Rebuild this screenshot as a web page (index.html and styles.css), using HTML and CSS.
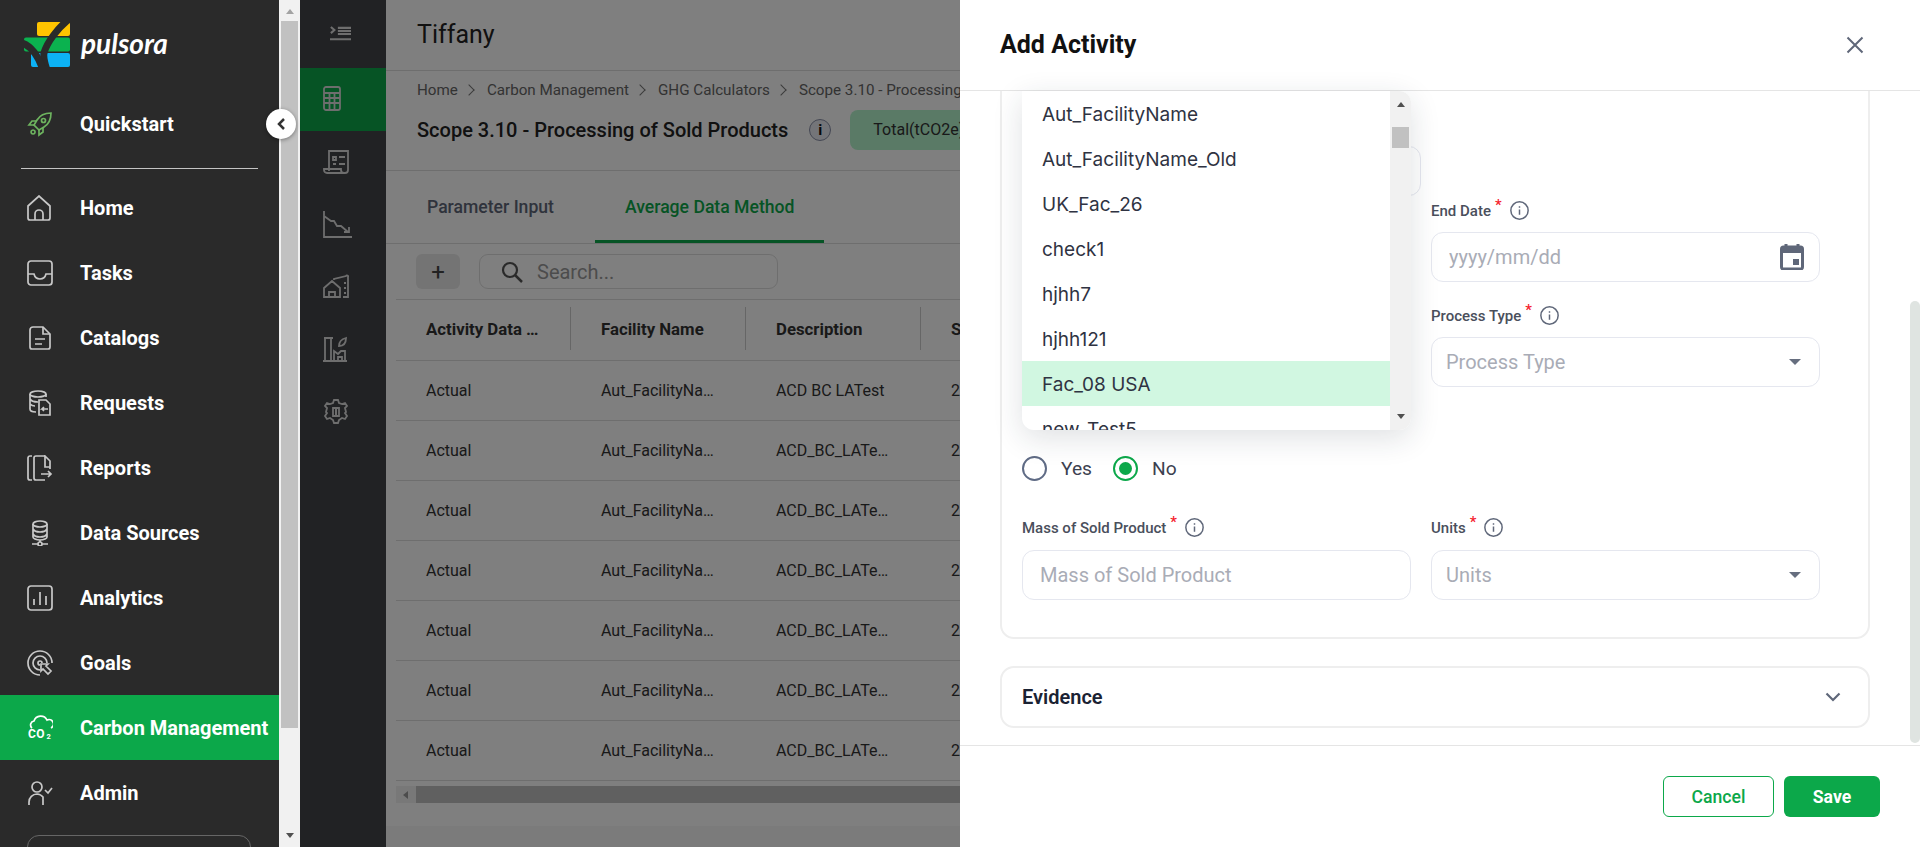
FILE: index.html
```html
<!DOCTYPE html>
<html lang="en">
<head>
	<meta charset="UTF-8">
	<title>Add Activity</title>
	<link rel="stylesheet" href="styles.css">
</head>
<body>

<aside class="sidebar">
	<div class="sideInner">
		<div class="logo">
			<svg class="logoMark" viewBox="0 0 46 46">
				<rect x="13" y="0" width="33" height="14" rx="2" fill="#ffc400"/>
				<rect x="0" y="15.500" width="46" height="14" rx="2" fill="#0bb24f"/>
				<rect x="7" y="31" width="39" height="14" rx="2" fill="#0db2f5"/>
				<path d="M45 -3C34 6 23 20 20 31C19 36 21 42 23 48" fill="none" stroke="#2a2a2a" stroke-width="7"/>
				<path d="M-2 21C7 24 14 33 19 48" fill="none" stroke="#2a2a2a" stroke-width="7"/>
			</svg>
			<span class="logoText">pulsora</span>
		</div>
		<a class="navItem"><svg class="navIcon green" viewBox="0 0 26 26"><path d="M24 2c-6 0-11 2-14 7l-3 5 5 5 5-3c5-3 7-8 7-14z"/><circle cx="16.500" cy="9.500" r="2"/><path d="M9 10H5l-3 4h5M16 17v4l-4 3v-5M6 19a2 2 0 1 0 .1 0z"/></svg>Quickstart</a>
		<div class="sideLine"></div>
		<a class="navItem"><svg class="navIcon" viewBox="0 0 26 26"><path d="M1 11 12 1l11 10v12a2 2 0 0 1-2 2H3a2 2 0 0 1-2-2z"/><path d="M8 25v-6a4 4 0 0 1 8 0v6"/></svg>Home</a>
		<a class="navItem"><svg class="navIcon" viewBox="0 0 26 26"><rect x="1" y="1" width="24" height="24" rx="3"/><path d="M1 14h6c1 4 3 5 6 5s5-1 6-5h6"/></svg>Tasks</a>
		<a class="navItem"><svg class="navIcon" viewBox="0 0 26 26"><path d="M16 2H6a3 3 0 0 0-3 3v17a2 2 0 0 0 2 2h16a2 2 0 0 0 2-2V9z"/><path d="M16 2v7h7M8 14h10M8 19h7"/></svg>Catalogs</a>
		<a class="navItem"><svg class="navIcon" viewBox="0 0 26 26"><ellipse cx="11" cy="4" rx="8" ry="3"/><path d="M3 4v15c0 1.500 2 3 6 3M19 4v3M3 9c1 2 4 3 8 3M3 14c1 1 3 2 5 2"/><path d="M12 10h7l4 4v11H12zM21 19h-6l2-2m-2 2 2 2"/></svg>Requests</a>
		<a class="navItem"><svg class="navIcon" viewBox="0 0 26 26"><path d="M5 1H3a2 2 0 0 0-2 2v20a2 2 0 0 0 2 2h2"/><path d="M18 1H9a2 2 0 0 0-2 2v20a2 2 0 0 0 2 2h9M18 1l5 5v6h-5V1zM23 14v-2M14 19h10m-3-3 3 3-3 3"/></svg>Reports</a>
		<a class="navItem"><svg class="navIcon" viewBox="0 0 26 26"><ellipse cx="13" cy="4" rx="7" ry="3"/><path d="M6 4v13c0 1.500 3 3 7 3s7-1.500 7-3V4M6 9c1 2 4 3 7 3s6-1 7-3M6 14c1 2 4 3 7 3s6-1 7-3M13 20v2M5 24h6m4 0h6"/><circle cx="13" cy="24" r="2"/></svg>Data Sources</a>
		<a class="navItem"><svg class="navIcon" viewBox="0 0 26 26"><rect x="1" y="1" width="24" height="24" rx="3"/><path d="M7 20v-6M13 20V7M19 20v-9"/></svg>Analytics</a>
		<a class="navItem"><svg class="navIcon" viewBox="0 0 26 26"><path d="M13 25a12 12 0 1 1 12-12"/><path d="M13 20a7 7 0 1 1 7-7"/><path d="M13 15a2 2 0 1 1 2-2M14 14h7l-2 2 5 5-3 3-5-5-2 2z"/></svg>Goals</a>
		<a class="navItem active"><svg class="navIcon" viewBox="0 0 26 26"><path d="M5 13a4 4 0 0 1 2-7 7 7 0 0 1 13-1 4 4 0 0 1 4 8"/><text x="1" y="23" class="co2">CO</text><text x="19.500" y="23.500" class="co2Sub">2</text></svg>Carbon Management</a>
		<a class="navItem"><svg class="navIcon" viewBox="0 0 26 26"><circle cx="10" cy="7" r="5"/><path d="M2 25v-3a8 8 0 0 1 8-8 8 8 0 0 1 6 3v8M18 10l3 3 4-5"/></svg>Admin</a>
		<div class="sideBox"></div>
	</div>
	<div class="sideBar">
		<span class="arrowUp"></span>
		<span class="sideThumb"></span>
		<span class="arrowDown"></span>
	</div>
	<div class="toggle"><svg width="12" height="14" viewBox="0 0 12 14"><path d="M9 2 4 7l5 5" fill="none" stroke="#333" stroke-width="2.500"/></svg></div>
</aside>

<nav class="rail">
	<div class="railTop"><svg class="railIcon" viewBox="0 0 24 18"><path d="M1 1l4 3.500L1 8M9 2h15M9 5.500h15M9 9h15M0 15h24" stroke-width="2.400"/></svg></div>
	<div class="railItem on"><svg class="railIcon small" viewBox="0 0 20 26"><rect x="1" y="1" width="16" height="23" rx="2"/><path d="M1 7h16M1 12h16M1 17h16M6.500 7v17M11.500 7v17"/></svg></div>
	<div class="railItem"><svg class="railIcon" viewBox="0 0 26 26"><path d="M6 22V2h19v19a3 3 0 0 1-3 3H4a3 3 0 0 1-3-3v-1h17v1a3 3 0 0 0 3 3"/><path d="M10 8h3v3h-3zM16 8h6M10 15h3M16 15h6"/></svg></div>
	<div class="railItem"><svg class="railIcon wide" viewBox="0 0 30 28"><path d="M1 1v26h28M1 6l7 5h3l3 5h4l7 6M26 17v5h-5"/></svg></div>
	<div class="railItem"><svg class="railIcon" viewBox="0 0 26 24"><path d="M1 13 9 6l8 7v9H1zM6 22v-5h6v5M11 5V4l12-3a1 1 0 0 1 2 1v20h-5M21 8h2M21 13h2M21 18h2"/></svg></div>
	<div class="railItem"><svg class="railIcon" viewBox="0 0 26 26"><path d="M0 25h24M2 25V2h6v23M1 2h9M11 25V15l4 3 3-3h4v10M15 25v-4h4v4M16 10c0-5 3-7 7-8 0 5-2 8-7 8z"/></svg></div>
	<div class="railItem"><svg class="railIcon" viewBox="0 0 26 26"><path d="M11 1h4l1 3 3 1 3-1 2 3-2 2 1 4-1 1 2 3-2 3-3-1-3 2-1 3h-4l-1-3-3-2-3 1-2-3 2-3-1-1 1-4-2-2 2-3 3 1 3-1z"/><path d="M10 9h6v8h-6zM12 11h2M12 13h2M12 15h2"/></svg></div>
</nav>

<main class="page">
	<header class="pageHead">Tiffany</header>
	<section class="titleBlock">
		<div class="crumbs">
			<span>Home</span><i class="crumbSep"></i>
			<span>Carbon Management</span><i class="crumbSep"></i>
			<span>GHG Calculators</span><i class="crumbSep"></i>
			<span>Scope 3.10 - Processing of Sold Products</span>
		</div>
		<div class="titleRow">
			<h1>Scope 3.10 - Processing of Sold Products</h1>
			<span class="infoDot">i</span>
			<span class="totalPill">Total(tCO2e)</span>
		</div>
	</section>
	<div class="tabs">
		<a class="tab">Parameter Input</a>
		<a class="tab current">Average Data Method</a>
	</div>
	<div class="toolbar">
		<button class="addBtn">+</button>
		<div class="search">
			<svg width="24" height="24" viewBox="0 0 24 24"><circle cx="10" cy="10" r="7" fill="none" stroke="#555" stroke-width="2.200"/><path d="M15 15l7 7" stroke="#555" stroke-width="2.500"/></svg>
			<span>Search...</span>
		</div>
	</div>
	<div class="table">
		<div class="tr th">
			<div class="td">Activity Data ...</div>
			<div class="td">Facility Name</div>
			<div class="td">Description</div>
			<div class="td">S</div>
		</div>
		<div class="tr"><div class="td">Actual</div><div class="td">Aut_FacilityName</div><div class="td">ACD BC LATest</div><div class="td">2</div></div>
		<div class="tr"><div class="td">Actual</div><div class="td">Aut_FacilityName</div><div class="td">ACD_BC_LATest</div><div class="td">2</div></div>
		<div class="tr"><div class="td">Actual</div><div class="td">Aut_FacilityName</div><div class="td">ACD_BC_LATest</div><div class="td">2</div></div>
		<div class="tr"><div class="td">Actual</div><div class="td">Aut_FacilityName</div><div class="td">ACD_BC_LATest</div><div class="td">2</div></div>
		<div class="tr"><div class="td">Actual</div><div class="td">Aut_FacilityName</div><div class="td">ACD_BC_LATest</div><div class="td">2</div></div>
		<div class="tr"><div class="td">Actual</div><div class="td">Aut_FacilityName</div><div class="td">ACD_BC_LATest</div><div class="td">2</div></div>
		<div class="tr"><div class="td">Actual</div><div class="td">Aut_FacilityName</div><div class="td">ACD_BC_LATest</div><div class="td">2</div></div>
	</div>
	<div class="hScroll"><span class="arrowLeft"></span><span class="hThumb"></span></div>
	<div class="pageFoot"></div>
</main>

<div class="overlay"></div>

<section class="drawer">
	<div class="drawerHead">
		<h2>Add Activity</h2>
		<svg width="18" height="18" viewBox="0 0 18 18"><path d="M1.500 1.500l15 15m0-15l-15 15" stroke="#5f6779" stroke-width="2"/></svg>
	</div>
	<div class="drawerBody">
		<div class="card">
			<div class="row first">
				<div class="box wide"></div>
			</div>
			<div class="row">
				<div></div>
				<div>
					<div class="label">End Date<sup>*</sup><svg class="info" viewBox="0 0 18 18"><circle cx="9" cy="9" r="8.200"/><path d="M9 8v5M9 5v1.500"/></svg></div>
					<div class="box">
						<input type="text" placeholder="yyyy/mm/dd">
						<svg class="calendar" viewBox="0 0 24 26"><path d="M6 0v3M18 0v3" stroke="#5f6779" stroke-width="3"/><rect x="1.500" y="3" width="21" height="22" rx="2" fill="#fff" stroke="#5f6779" stroke-width="3"/><path d="M1.500 3h21v6h-21z" fill="#5f6779"/><rect x="13" y="15" width="6" height="6" fill="#5f6779"/></svg>
					</div>
				</div>
			</div>
			<div class="row">
				<div></div>
				<div>
					<div class="label">Process Type<sup>*</sup><svg class="info" viewBox="0 0 18 18"><circle cx="9" cy="9" r="8.200"/><path d="M9 8v5M9 5v1.500"/></svg></div>
					<div class="box select">
						<input type="text" placeholder="Process Type">
						<i class="caret"></i>
					</div>
				</div>
			</div>
			<div class="row radioRow">
				<div>
					<div class="label peek"><svg class="info" viewBox="0 0 18 18"><circle cx="9" cy="9" r="8.200"/><path d="M9 8v5M9 5v1.500"/></svg></div>
					<div class="radios">
						<span class="radio"></span><span class="radioText">Yes</span>
						<span class="radio checked"></span><span class="radioText">No</span>
					</div>
				</div>
			</div>
			<div class="row last">
				<div>
					<div class="label">Mass of Sold Product<sup>*</sup><svg class="info" viewBox="0 0 18 18"><circle cx="9" cy="9" r="8.200"/><path d="M9 8v5M9 5v1.500"/></svg></div>
					<div class="box"><input type="text" placeholder="Mass of Sold Product"></div>
				</div>
				<div>
					<div class="label">Units<sup>*</sup><svg class="info" viewBox="0 0 18 18"><circle cx="9" cy="9" r="8.200"/><path d="M9 8v5M9 5v1.500"/></svg></div>
					<div class="box select">
						<input type="text" placeholder="Units">
						<i class="caret"></i>
					</div>
				</div>
			</div>
		</div>
		<div class="evidence">
			<span>Evidence</span>
			<svg width="16" height="10" viewBox="0 0 16 10"><path d="M1.500 1.500 8 8l6.500-6.500" fill="none" stroke="#5f6779" stroke-width="2.200"/></svg>
		</div>
		<span class="drawerThumb"></span>
	</div>
	<div class="drawerFoot">
		<button class="btn cancel">Cancel</button>
		<button class="btn save">Save</button>
	</div>

	<div class="dropdown">
		<ul class="options">
			<li>Aut_FacilityName</li>
			<li>Aut_FacilityName_Old</li>
			<li>UK_Fac_26</li>
			<li>check1</li>
			<li>hjhh7</li>
			<li>hjhh121</li>
			<li class="selected">Fac_08 USA</li>
			<li>new_Test5</li>
		</ul>
		<div class="dropBar">
			<span class="arrowUp dark"></span>
			<span class="dropThumb"></span>
			<span class="arrowDown dark"></span>
		</div>
	</div>
</section>

</body>
</html>
```

FILE: styles.css
```css
html, body {
	margin: 0;
	padding: 0;
	height: 100%;
	overflow: hidden;
}

body {
	display: flex;
	font-family: Roboto, "Liberation Sans", sans-serif;
	background: #fff;
}

a {
	text-decoration: none;
	color: inherit;
}

/* left sidebar */
.sidebar {
	position: relative;
	z-index: 3;
	display: flex;
	flex: 0 0 300px;
	height: 847px;
}

.sideInner {
	width: 279px;
	background: #2a2a2a;
	overflow: hidden;
}

.logo {
	display: flex;
	align-items: center;
	height: 91px;
	padding-left: 24px;
	box-sizing: border-box;
}

.logoMark {
	width: 46px;
	height: 46px;
	margin-top: -1px;
}

.logoText {
	margin-left: 11px;
	margin-top: -5px;
	font-family: Lato, sans-serif;
	font-size: 28px;
	font-weight: 700;
	font-style: italic;
	color: #fff;
}

.navItem {
	display: flex;
	align-items: center;
	height: 65px;
	padding-left: 27px;
	font-size: 20px;
	font-weight: 700;
	color: #fff;
	white-space: nowrap;
}

.navItem.active {
	background: #0ca84a;
}

.navIcon {
	width: 26px;
	height: 26px;
	margin-right: 27px;
	fill: none;
	stroke: #c8c8c8;
	stroke-width: 1.700;
}

.navIcon.green {
	stroke: #6db35f;
}

.active .navIcon {
	stroke: #fff;
}

.navIcon .co2, .navIcon .co2Sub {
	fill: #fff;
	stroke: none;
	font-weight: 700;
	font-size: 12px;
	letter-spacing: 0.500px;
}

.navIcon .co2Sub {
	font-size: 7.500px;
}

.sideLine {
	height: 1px;
	margin: 12px 21px 6px;
	background: #c4c4c4;
}

.sideBox {
	height: 60px;
	margin: 10px 28px 0 27px;
	border: 1px solid #666;
	border-radius: 12px;
}

.sideBar {
	display: flex;
	flex-direction: column;
	align-items: center;
	width: 21px;
	background: #f1f1f1;
}

.sideThumb {
	width: 17px;
	height: 707px;
	margin-top: 7px;
	background: #c1c1c1;
}

.sideBar .arrowUp {
	margin-top: 9px;
}

.sideBar .arrowDown {
	margin-top: auto;
	margin-bottom: 9px;
}

.arrowUp, .arrowDown {
	flex: none;
	width: 0;
	height: 0;
	border-left: 4.500px solid transparent;
	border-right: 4.500px solid transparent;
}

.arrowUp {
	border-bottom: 5px solid #a3a3a3;
}

.arrowDown {
	border-top: 5px solid #505050;
}

.arrowUp.dark {
	border-bottom-color: #505050;
}

.toggle {
	position: absolute;
	left: 266px;
	top: 109px;
	display: flex;
	align-items: center;
	justify-content: center;
	width: 30px;
	height: 30px;
	border-radius: 50%;
	background: #fff;
	box-shadow: 0 1px 4px rgba(0, 0, 0, 0.4);
}

/* second rail */
.rail {
	flex: 0 0 86px;
	background: #424448;
}

.railTop {
	display: flex;
	align-items: center;
	justify-content: center;
	height: 68px;
	padding-right: 6px;
	box-sizing: border-box;
}

.railItem {
	display: flex;
	align-items: center;
	height: 62.500px;
	padding-left: 23px;
	box-sizing: border-box;
}

.railItem.on {
	background: #0ca84a;
}

.railIcon {
	width: 26px;
	height: 26px;
	fill: none;
	stroke: #dcdcdc;
	stroke-width: 1.800;
}

.railTop .railIcon {
	width: 21px;
	height: 16px;
}

.railIcon.small {
	width: 20px;
}

.railIcon.wide {
	width: 30px;
	height: 28px;
}

/* page behind the drawer */
.page {
	display: flex;
	flex-direction: column;
	flex: 1;
	min-width: 0;
	height: 847px;
	overflow: hidden;
	color: #333;
}

.pageHead {
	height: 70px;
	padding: 0 0 0 31px;
	line-height: 69px;
	font-size: 25px;
	font-weight: 400;
	color: #222;
	border-bottom: 1px solid #ddd;
	flex: none;
}

.titleBlock {
	flex: none;
	height: 99px;
	padding-left: 31px;
	border-bottom: 1px solid #ddd;
}

.crumbs {
	display: flex;
	align-items: center;
	height: 38px;
	font-size: 15.200px;
	color: #666;
	white-space: nowrap;
}

.crumbSep {
	width: 7px;
	height: 7px;
	margin: 0 14px 0 7px;
	border-top: 1.500px solid #777;
	border-right: 1.500px solid #777;
	transform: rotate(45deg);
}

.titleRow {
	display: flex;
	align-items: center;
	height: 42px;
}

.titleRow h1 {
	margin: 0;
	font-size: 20px;
	font-weight: 500;
	color: #222;
	white-space: nowrap;
}

.infoDot {
	flex: none;
	width: 20px;
	height: 20px;
	margin-left: 21px;
	border: 1px solid #8a90a8;
	border-radius: 50%;
	background: #e8eaf2;
	font-size: 15px;
	font-weight: 700;
	line-height: 20px;
	text-align: center;
	color: #111;
}

.totalPill {
	flex: none;
	width: 300px;
	height: 40px;
	margin-left: 19px;
	padding-left: 23px;
	border-radius: 8px;
	background: #b4f4cc;
	font-size: 16px;
	line-height: 40px;
	color: #333;
}

.tabs {
	display: flex;
	flex: none;
	height: 73px;
	padding-left: 11px;
	box-sizing: border-box;
	border-bottom: 1px solid #ddd;
}

.tab {
	padding: 0 30px;
	line-height: 72px;
	font-size: 17.600px;
	font-weight: 500;
	color: #5f6779;
}

.tab.current {
	height: 72px;
	margin-left: 11px;
	border-bottom: 3px solid #0ca84a;
	box-sizing: border-box;
	color: #0ca84a;
}

.toolbar {
	display: flex;
	flex: none;
	gap: 19px;
	height: 55px;
	padding: 10px 0 0 30px;
	box-sizing: border-box;
}

.addBtn {
	width: 44px;
	height: 35px;
	padding: 0;
	border: 0;
	border-radius: 6px;
	background: #e9e9e9;
	font-family: inherit;
	font-size: 24px;
	color: #444;
}

.search {
	display: flex;
	align-items: center;
	width: 299px;
	height: 35px;
	padding-left: 20px;
	box-sizing: border-box;
	border: 1px solid #ddd;
	border-radius: 9px;
	font-size: 20px;
	color: #999;
}

.search span {
	margin-left: 13px;
}

.table {
	flex: none;
	margin-left: 10px;
	width: 900px;
	border-top: 1px solid #ddd;
}

.tr {
	display: flex;
	height: 60px;
	box-sizing: border-box;
	border-bottom: 1px solid #ddd;
}

.tr.th {
	height: 61px;
}

.td {
	position: relative;
	flex: 0 0 175px;
	box-sizing: border-box;
	padding-left: 30px;
	line-height: 59px;
	font-size: 16px;
	color: #333;
}

.tr .td:nth-child(-n+3) {
	padding-right: 32px;
	overflow: hidden;
	white-space: nowrap;
	text-overflow: ellipsis;
}

.th .td {
	font-size: 16.800px;
	font-weight: 700;
	line-height: 59px;
	color: #333;
}

.th .td:nth-child(-n+3)::after {
	content: "";
	position: absolute;
	right: 0;
	top: 7px;
	height: 43px;
	width: 1px;
	background: #ccc;
}

.hScroll {
	display: flex;
	flex: none;
	align-items: center;
	width: 900px;
	height: 17px;
	margin: 5px 0 0 10px;
	background: #f1f1f1;
}

.arrowLeft {
	width: 0;
	height: 0;
	margin: 0 8px 0 7px;
	border-top: 4.500px solid transparent;
	border-bottom: 4.500px solid transparent;
	border-right: 5px solid #999;
}

.hThumb {
	flex: 1;
	height: 17px;
	background: #c1c1c1;
}

.pageFoot {
	flex: none;
	height: 21px;
	margin-top: auto;
	background: #f6f6f6;
}

.overlay {
	position: fixed;
	left: 300px;
	right: 0;
	top: 0;
	bottom: 0;
	z-index: 1;
	background: rgba(0, 0, 0, 0.5);
}

/* drawer */
.drawer {
	position: fixed;
	top: 0;
	right: 0;
	bottom: 0;
	z-index: 2;
	display: flex;
	flex-direction: column;
	width: 960px;
	background: #fff;
}

.drawerHead {
	display: flex;
	flex: none;
	align-items: center;
	justify-content: space-between;
	height: 91px;
	padding: 0 56px 1px 40px;
	box-sizing: border-box;
	border-bottom: 1px solid #e5e5e5;
}

.drawerHead h2 {
	margin: 0;
	font-size: 25px;
	font-weight: 700;
	color: #111;
}

.drawerBody {
	position: relative;
	flex: 1;
	min-height: 0;
	padding-left: 40px;
	overflow: hidden;
}

.card {
	width: 870px;
	box-sizing: border-box;
	margin-top: -40px;
	padding: 93px 0 37px 20px;
	border: 2px solid #eeeeee;
	border-radius: 14px;
}

.row {
	display: grid;
	grid-template-columns: 389px 389px;
	column-gap: 20px;
	margin-bottom: 23px;
}

.row.first {
	margin-bottom: 4px;
}

.row.radioRow {
	margin-bottom: 36px;
}

.row.last {
	margin-bottom: 0;
}

.label {
	display: flex;
	align-items: center;
	height: 21px;
	margin-bottom: 11px;
	font-size: 15px;
	font-weight: 500;
	color: #4a4f5c;
	white-space: nowrap;
}

.label.peek {
	padding-left: 297px;
	margin-bottom: 25px;
}

.last .label {
	margin-bottom: 12px;
}

.label sup {
	margin: -10px 0 0 4px;
	font-size: 15px;
	line-height: 1;
	color: #f5222d;
}

.info {
	flex: none;
	width: 19px;
	height: 19px;
	margin-left: 8px;
	fill: none;
	stroke: #5f6779;
	stroke-width: 1.400;
}

.peek .info {
	margin-left: 0;
}

.box {
	display: flex;
	align-items: center;
	height: 50px;
	padding: 0 17px;
	box-sizing: border-box;
	border: 1px solid #e5e7ef;
	border-radius: 12px;
}

.box.wide {
	width: 399px;
}

.box.select {
	padding: 0 14px;
}

.box input {
	flex: 1;
	min-width: 0;
	padding: 0;
	border: 0;
	outline: 0;
	font-family: inherit;
	font-size: 20px;
	background: transparent;
}

.box input::placeholder {
	color: #a9acb6;
}

.calendar {
	flex: none;
	width: 24px;
	height: 26px;
	margin-right: -2px;
}

.caret {
	flex: none;
	width: 0;
	height: 0;
	margin: 0 4px 0 0;
	border-left: 6.500px solid transparent;
	border-right: 6.500px solid transparent;
	border-top: 6.500px solid #666e7f;
}

.radios {
	display: flex;
	align-items: center;
	height: 25px;
}

.radio {
	flex: none;
	box-sizing: border-box;
	width: 25px;
	height: 25px;
	border: 2.500px solid #5f6b85;
	border-radius: 50%;
	background: #fff;
}

.radio.checked {
	position: relative;
	border-color: #0ca84a;
}

.radio.checked::after {
	content: "";
	position: absolute;
	left: 3.500px;
	top: 3.500px;
	width: 13px;
	height: 13px;
	border-radius: 50%;
	background: #0ca84a;
}

.radioText {
	margin: 0 21px 0 14px;
	font-size: 19.200px;
	color: #3c4150;
}

.evidence {
	display: flex;
	align-items: center;
	justify-content: space-between;
	width: 870px;
	height: 62px;
	margin-top: 27px;
	padding: 0 27px 0 20px;
	box-sizing: border-box;
	border: 2px solid #eeeeee;
	border-radius: 14px;
	font-size: 20px;
	font-weight: 600;
	color: #1a2233;
}

.drawerThumb {
	position: absolute;
	right: 0;
	top: 210px;
	width: 10px;
	height: 442px;
	border-radius: 5px;
	background: #dfe4e1;
}

.drawerFoot {
	display: flex;
	flex: none;
	justify-content: flex-end;
	gap: 10px;
	height: 102px;
	padding: 30px 40px 0 0;
	box-sizing: border-box;
	border-top: 1px solid #e5e5e5;
}

.btn {
	height: 41px;
	border-radius: 6px;
	font-family: inherit;
	font-size: 17.600px;
	font-weight: 500;
}

.btn.cancel {
	width: 111px;
	border: 1px solid #0ca84a;
	background: #fff;
	color: #0ca84a;
}

.btn.save {
	width: 96px;
	border: 0;
	background: #0ca84a;
	color: #fff;
	font-weight: 700;
}

/* facility dropdown, open over the form */
.dropdown {
	position: absolute;
	left: 62px;
	top: 91px;
	display: flex;
	width: 389px;
	height: 339px;
	overflow: hidden;
	background: #fff;
	border-radius: 0 12px 12px 12px;
	box-shadow: 0 8px 30px rgba(30, 40, 60, 0.14);
}

.options {
	flex: 1;
	margin: 0;
	padding: 0;
	list-style: none;
	overflow: hidden;
}

.options li {
	height: 45px;
	padding-left: 20px;
	line-height: 47px;
	font-family: Inter, Roboto, sans-serif;
	font-size: 19px;
	color: #2f3342;
}

.options li.selected {
	background: #d1f7e1;
}

.dropBar {
	display: flex;
	flex-direction: column;
	align-items: center;
	flex: 0 0 21px;
	background: #f1f1f1;
}

.dropBar .arrowUp {
	margin-top: 11px;
}

.dropThumb {
	width: 17px;
	height: 21px;
	margin-top: 20px;
	background: #c1c1c1;
}

.dropBar .arrowDown {
	margin-top: auto;
	margin-bottom: 11px;
}
```
